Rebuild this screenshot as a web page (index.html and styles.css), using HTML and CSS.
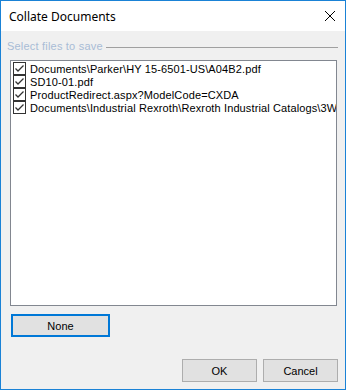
FILE: index.html
```html
<!DOCTYPE html>
<html lang="en">
<head>
    <meta charset="UTF-8">
    <meta name="viewport" content="width=device-width, initial-scale=1.0">
    <title>Collate Documents</title>
    <link rel="stylesheet" href="styles.css">
</head>
<body>
    <div class="window">
        <div class="titlebar">
            <span class="title">Collate Documents</span>
            <svg class="close" width="12" height="12" viewBox="0 0 12 12">
                <path d="M1 1 L11 11 M11 1 L1 11" stroke="#000" stroke-width="1" fill="none"/>
            </svg>
        </div>

        <div class="content">
            <div class="group-header">
                <span class="group-label">Select files to save</span>
                <span class="group-rule"></span>
            </div>

            <ul class="file-list">
                <li class="file-item"><span class="checkbox"><svg width="11" height="11" viewBox="0 0 11 11"><path d="M1.5 5.5 L4 8 L9.5 2.5" stroke="#333" stroke-width="1.3" fill="none"/></svg></span>Documents\Parker\HY 15-6501-US\A04B2.pdf</li>
                <li class="file-item"><span class="checkbox"><svg width="11" height="11" viewBox="0 0 11 11"><path d="M1.5 5.5 L4 8 L9.5 2.5" stroke="#333" stroke-width="1.3" fill="none"/></svg></span>SD10-01.pdf</li>
                <li class="file-item"><span class="checkbox"><svg width="11" height="11" viewBox="0 0 11 11"><path d="M1.5 5.5 L4 8 L9.5 2.5" stroke="#333" stroke-width="1.3" fill="none"/></svg></span>ProductRedirect.aspx?ModelCode=CXDA</li>
                <li class="file-item"><span class="checkbox"><svg width="11" height="11" viewBox="0 0 11 11"><path d="M1.5 5.5 L4 8 L9.5 2.5" stroke="#333" stroke-width="1.3" fill="none"/></svg></span>Documents\Industrial Rexroth\Rexroth Industrial Catalogs\3WE6</li>
            </ul>

            <button class="btn btn-focus">None</button>

            <div class="actions">
                <button class="btn">OK</button>
                <button class="btn">Cancel</button>
            </div>
        </div>
    </div>
</body>
</html>
```

FILE: styles.css
```css
body {
    margin: 0;
    font-family: "Liberation Sans", Arial, sans-serif;
    font-size: 11px;
    color: #000;
}

.window {
    width: 346px;
    height: 390px;
    box-sizing: border-box;
    border: 1px solid #1a82d6;
    display: flex;
    flex-direction: column;
    background: #f0f0f0;
}

.titlebar {
    height: 30px;
    background: #fff;
    display: flex;
    align-items: center;
    justify-content: space-between;
    padding: 0 9px 0 8px;
}

.title {
    font-family: "Noto Sans", "Open Sans", sans-serif;
    font-size: 12px;
}

.close {
    display: block;
}

.content {
    flex: 1;
    display: flex;
    flex-direction: column;
    padding: 0 7px 0 6px;
}

.group-header {
    display: flex;
    align-items: center;
    height: 26px;
    padding-top: 3px;
    box-sizing: border-box;
}

.group-label {
    color: #a8bcd6;
    font-size: 11px;
    letter-spacing: 0.2px;
    padding-right: 3px;
}

.group-rule {
    flex: 1;
    height: 1px;
    background: #a0a0a0;
    margin-top: 3px;
}

.file-list {
    list-style: none;
    margin: 3px 1px 0 3px;
    padding: 1px 0 0 2px;
    height: 246px;
    box-sizing: border-box;
    background: #fff;
    border: 1px solid #828790;
    overflow: hidden;
}

.file-item {
    display: flex;
    align-items: center;
    height: 13px;
    white-space: nowrap;
    letter-spacing: 0.12px;
}

.checkbox {
    width: 11px;
    height: 11px;
    border: 1px solid #333;
    background: #fff;
    margin-right: 4px;
    flex-shrink: 0;
    display: flex;
}

.btn {
    font-family: "Liberation Sans", Arial, sans-serif;
    font-size: 11px;
    color: #000;
    background: #e1e1e1;
    border: 1px solid #adadad;
    height: 23px;
    width: 75px;
    padding: 0;
}

.btn-focus {
    width: 99px;
    border: 2px solid #0078d7;
    margin: 8px 0 0 4px;
}

.actions {
    margin-top: auto;
    margin-bottom: 7px;
    display: flex;
    justify-content: flex-end;
    gap: 6px;
}
```
